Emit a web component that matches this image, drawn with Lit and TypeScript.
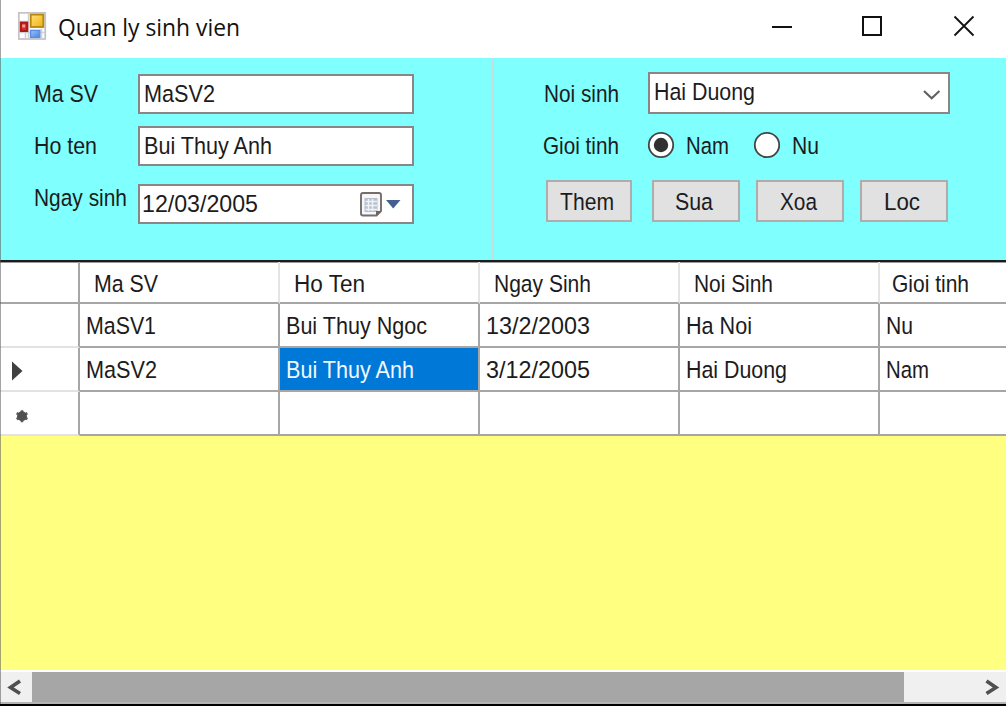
import { LitElement, html, svg, css } from "lit";
import { customElement, property } from "lit/decorators.js";

/** One line of text fitted to a fixed advance width. */
@customElement("fit-text")
class FitText extends LitElement {
  @property() text = "";
  @property({ type: Number }) w = 0;

  static styles = css`
    :host { display: block; height: 24px; flex: none; }
    svg { display: block; overflow: visible; }
    text { font-family: inherit; font-size: inherit; fill: currentColor; white-space: pre; }
  `;

  render() {
    return html`<svg width=${this.w} height="24">
      ${svg`<text x="0" y="19" textLength=${this.w} lengthAdjust="spacingAndGlyphs">${this.text}</text>`}
    </svg>`;
  }
}

const t = (text: string, w: number) => html`<fit-text .text=${text} .w=${w}></fit-text>`;

type Cell = [string, number];

@customElement("app-root")
class AppRoot extends LitElement {
  static styles = css`
    :host {
      display: block; width: 1006px; height: 706px; overflow: hidden;
      font-family: "Liberation Sans", Arial, sans-serif; font-size: 24.3px;
      color: #1c1c1c; background: #fff;
    }
    * { box-sizing: border-box; }
    svg { display: block; flex: none; }
    .window {
      height: 706px; display: flex; flex-direction: column; position: relative;
      border-bottom: 2px solid #000;
    }
    .window::before {
      content: ""; position: absolute; left: 0; top: 0; width: 1px; height: 704px;
      background: rgba(90, 90, 90, 0.55); z-index: 2;
    }
    .titlebar { height: 58px; display: flex; padding-left: 18px; }
    .titlebar .logo { margin-top: 12px; }
    .titlebar .name {
      margin: 17px 0 0 11px; flex: 1; font-family: "Open Sans", sans-serif; font-size: 24px; color: #111;
    }
    .titlebar .controls { margin-top: 15px; }
    .panels { height: 202px; display: flex; background: #80ffff; }
    .left { width: 494px; border-right: 2px solid #c3dede; padding: 16px 0 0 34px; }
    .right { flex: 1; padding: 14px 0 0 49px; }
    .field { display: flex; height: 40px; margin-bottom: 12px; }
    .field.date { margin-top: 18px; }
    .label { padding-top: 9px; width: 104px; flex: none; }
    .date .label { padding-top: 3px; }
    .box {
      width: 276px; height: 40px; border: 2px solid #8a8586; background: #fff;
      padding: 7px 0 0 4px; display: flex;
    }
    .date .box { padding-left: 2px; }
    .box .push { flex: 1; }
    .combo-row { display: flex; height: 42px; }
    .combo-row .label { padding: 11px 0 0 1px; width: 105px; }
    .combo { width: 302px; height: 42px; padding-top: 7px; }
    .chev { margin: 7px 6px 0 0; }
    .radios { display: flex; height: 28px; margin-top: 17px; }
    .radios .label { padding-top: 4px; width: 104px; }
    .radios .opt { display: flex; }
    .radios .opt fit-text { margin: 4px 0 0 11px; }
    .radios .nu { margin-left: 24px; }
    .buttons { display: flex; padding-left: 3px; margin-top: 21px; }
    .btn {
      width: 88px; height: 42px; border: 2px solid #b0acac; background: #e1e1e1;
      padding: 9px 4px 0 0; display: flex; justify-content: center; margin-right: 16px;
    }
    .btn.first { width: 86px; margin-right: 20px; }
    .grid { border-top: 2px solid #1c1c1c; flex: 1; display: flex; flex-direction: column; background: #ffff80; }
    .tr {
      display: grid; grid-template-columns: 80px repeat(4, 200px) 126px;
      height: 44px; background: #fff; overflow: hidden; width: 1006px;
    }
    .th-row { height: 42px; box-shadow: inset 0 1px 0 #999; }
    .td {
      border-right: 2px solid #a6a6a6; border-bottom: 2px solid #a6a6a6;
      padding: 11px 0 0 6px;
    }
    .th { padding: 11px 0 0 14px; border-right: 2px solid #e4e4e4; border-bottom: 2px solid #a6a6a6; }
    .th:first-child { border-right-color: #a6a6a6; }
    .th:last-child, .td:last-child { border-right: 0; }
    .th:last-child { padding-left: 12px; }
    .rh { border-bottom-color: #e2e2e2; padding: 0; }
    .sel { background: #0078d7; color: #f2f8ff; }
    .space { flex: 1; }
    .scroll {
      height: 34px; border-top: 2px solid #fdfdfd; border-bottom: 2px solid #b4b4b4;
      background: #f0f0f0; display: flex; align-items: stretch;
    }
    .thumb { width: 872px; background: #a6a6a6; }
    .scroll .btn-right { flex: 1; display: flex; justify-content: flex-end; }
  `;

  private headers: Cell[] = [["Ma SV", 64], ["Ho Ten", 71], ["Ngay Sinh", 97], ["Noi Sinh", 79], ["Gioi tinh", 77]];
  private rows: Cell[][] = [
    [["MaSV1", 70], ["Bui Thuy Ngoc", 141], ["13/2/2003", 104], ["Ha Noi", 66], ["Nu", 27]],
    [["MaSV2", 71], ["Bui Thuy Anh", 128], ["3/12/2005", 104], ["Hai Duong", 101], ["Nam", 43]],
  ];

  private radio(on: boolean) {
    return html`<svg width="28" height="28" viewBox="0 0 28 28">
      <circle cx="14" cy="14" r="12.2" fill="#fff" stroke="#444" stroke-width="1.8" />
      ${on ? svg`<circle cx="14" cy="14" r="7.2" fill="#303030" />` : ""}
    </svg>`;
  }

  private row(cells: Cell[], mark: unknown, selected = -1) {
    return html`<div class="tr">
      <div class="td rh">${mark}</div>
      ${cells.map(([s, w], i) => html`<div class="td ${i === selected ? "sel" : ""}">${s ? t(s, w) : ""}</div>`)}
    </div>`;
  }

  render() {
    const arrow = html`<svg width="78" height="42"><path d="M12 13.5L22.5 23L12 32.5Z" fill="#404040" /></svg>`;
    const star = html`<svg width="78" height="42">
      <g stroke="#606060" stroke-width="2.6"><path d="M22 18.2V30.2M16.6 21.2L27.4 27.2M27.4 21.2L16.6 27.2" /></g>
      <circle cx="22" cy="24.2" r="4.9" fill="#505050" />
    </svg>`;
    return html`<div class="window">
      <div class="titlebar">
        <svg class="logo" width="29" height="28" viewBox="0 0 29 28">
          <defs>
            <linearGradient id="y" x1="0" y1="0" x2="1" y2="1"><stop offset="0" stop-color="#ffe27a" /><stop offset="1" stop-color="#f0b010" /></linearGradient>
            <linearGradient id="b" x1="0" y1="0" x2="1" y2="1"><stop offset="0" stop-color="#9cc4ff" /><stop offset="1" stop-color="#4a80dc" /></linearGradient>
          </defs>
          <rect x="0.8" y="0.8" width="26.4" height="26.2" fill="#fff" stroke="#c4c4c8" stroke-width="1.8" />
          <path d="M10.5 1V27M1 9.5H11M1 20.5H27M23.5 17V27M7.5 21V27" stroke="#d0d0d4" stroke-width="1.5" />
          <rect x="12.7" y="2.6" width="12.6" height="12.4" fill="url(#y)" stroke="#b8860c" stroke-width="1.8" />
          <rect x="2.8" y="10.6" width="6.4" height="8.4" fill="#d03028" stroke="#b01818" stroke-width="2" />
          <rect x="4.2" y="12.5" width="3" height="3" fill="#f0a090" />
          <rect x="12.6" y="18.4" width="9.2" height="7" fill="url(#b)" stroke="#5c8ce0" stroke-width="1.4" />
        </svg>
        <div class="name">${t("Quan ly sinh vien", 182)}</div>
        <svg class="controls" width="234" height="24" viewBox="772 15 234 24" fill="none" stroke="#111" stroke-width="2">
          <path d="M772 27H792" />
          <rect x="863" y="17" width="18" height="18" />
          <path d="M954.5 16.5L973.5 35.5M973.5 16.5L954.5 35.5" stroke-width="1.8" />
        </svg>
      </div>

      <div class="panels">
        <div class="left">
          <div class="field"><div class="label">${t("Ma SV", 64)}</div><div class="box">${t("MaSV2", 71)}</div></div>
          <div class="field"><div class="label">${t("Ho ten", 63)}</div><div class="box">${t("Bui Thuy Anh", 128)}</div></div>
          <div class="field date">
            <div class="label">${t("Ngay sinh", 93)}</div>
            <div class="box">
              ${t("12/03/2005", 116)}
              <span class="push"></span>
              <svg class="calendar" width="52" height="27" viewBox="360 193 52 27" overflow="visible">
                <path d="M363 193H379Q381 193 381 195V211L376.5 215.5H363Q361 215.5 361 213.5V195Q361 193 363 193Z" fill="#f6f7f9" stroke="#756d6c" stroke-width="1.9" />
                <rect x="364.5" y="198" width="13" height="14" fill="#b9c0cd" />
                <path d="M365.5 201.5H377M365.5 205.5H377M365.5 209.5H377M368.5 199V211M372.5 199V211" stroke="#eef2f8" stroke-width="1.5" />
                <path d="M376 216V211H381.5Z" fill="#6c6464" />
                <path d="M386 200H400.5L393.2 208.5Z" fill="#43608f" />
              </svg>
            </div>
          </div>
        </div>
        <div class="right">
          <div class="combo-row">
            <div class="label">${t("Noi sinh", 75)}</div>
            <div class="box combo">${t("Hai Duong", 101)}<span class="push"></span>
              <svg class="chev" width="20" height="14"><path d="M2 3L9.7 10.2L17.4 3" fill="none" stroke="#606060" stroke-width="2.1" /></svg>
            </div>
          </div>
          <div class="radios">
            <div class="label">${t("Gioi tinh", 76)}</div>
            <div class="opt">${this.radio(true)}${t("Nam", 43)}</div>
            <div class="opt nu">${this.radio(false)}${t("Nu", 27)}</div>
          </div>
          <div class="buttons">
            <div class="btn first">${t("Them", 54)}</div>
            <div class="btn">${t("Sua", 38)}</div>
            <div class="btn">${t("Xoa", 37)}</div>
            <div class="btn">${t("Loc", 36)}</div>
          </div>
        </div>
      </div>

      <div class="grid">
        <div class="tr th-row">
          <div class="th"></div>
          ${this.headers.map(([s, w]) => html`<div class="th">${t(s, w)}</div>`)}
        </div>
        ${this.row(this.rows[0], "")}
        ${this.row(this.rows[1], arrow, 1)}
        ${this.row([["", 0], ["", 0], ["", 0], ["", 0], ["", 0]], star)}
        <div class="space"></div>
        <div class="scroll">
          <svg width="32" height="30"><path d="M20 9L10.5 15.5L20 21.5" fill="none" stroke="#505050" stroke-width="3.6" /></svg>
          <div class="thumb"></div>
          <div class="btn-right"><svg width="32" height="30"><path d="M12.5 9L22 15.5L12.5 21.5" fill="none" stroke="#505050" stroke-width="3.6" /></svg></div>
        </div>
      </div>
    </div>`;
  }
}
